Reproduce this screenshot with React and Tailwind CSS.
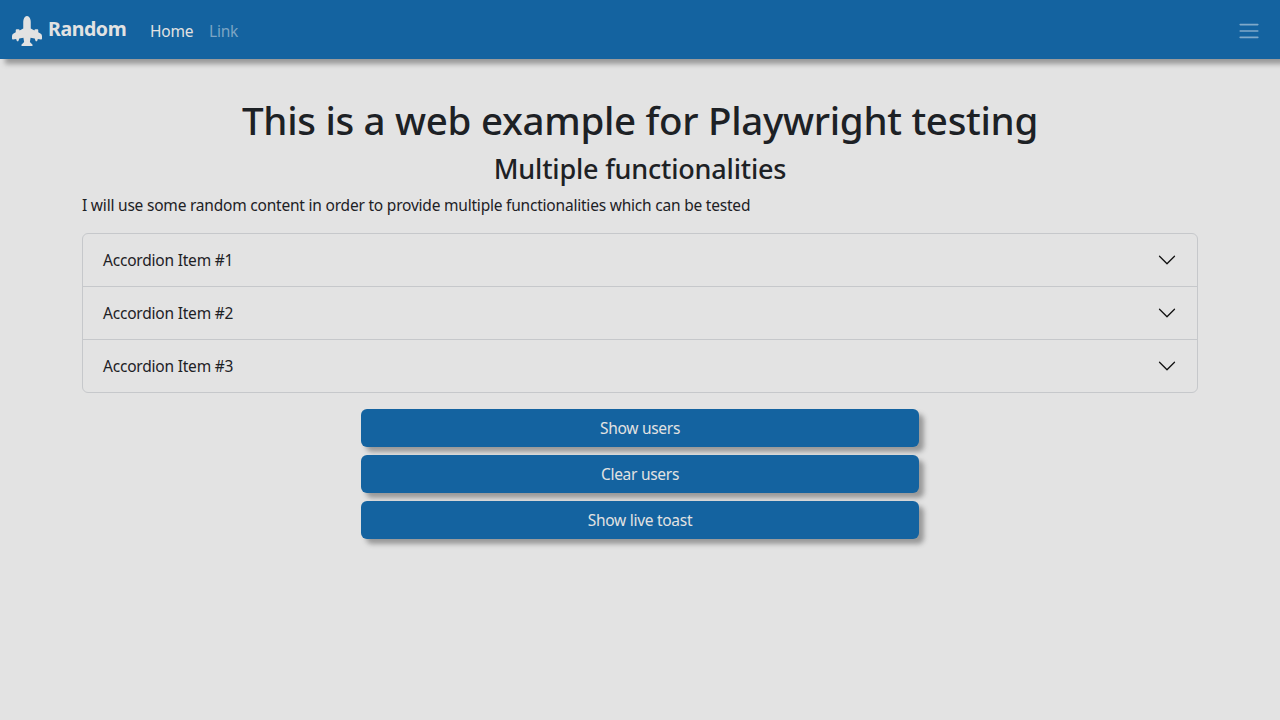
const items = ["Accordion Item #1", "Accordion Item #2", "Accordion Item #3"];
const buttons = ["Show users", "Clear users", "Show live toast"];

function Plane() {
  return (
    <svg width="30" height="30" viewBox="0 0 16 16" fill="currentColor" className="shrink-0">
      <path d="M8 0c-.787 0-1.292.592-1.572 1.151A4.347 4.347 0 0 0 6 3v3.691l-2 1V7.5a.5.5 0 0 0-.5-.5h-1a.5.5 0 0 0-.5.5v1.191l-1.17.585A1.5 1.5 0 0 0 0 10.618V12a.5.5 0 0 0 .582.493l1.631-.272.313.937a.5.5 0 0 0 .948 0l.405-1.214 2.21-.369.375 2.253-1.318 1.318A.5.5 0 0 0 5.5 16h5a.5.5 0 0 0 .354-.854l-1.318-1.318.375-2.253 2.21.369.405 1.214a.5.5 0 0 0 .948 0l.313-.937 1.63.272A.5.5 0 0 0 16 12v-1.382a1.5 1.5 0 0 0-.83-1.342L14 8.691V7.5a.5.5 0 0 0-.5-.5h-1a.5.5 0 0 0-.5.5v.191l-2-1V3c0-.568-.14-1.271-.428-1.849C9.292.591 8.787 0 8 0Z" />
    </svg>
  );
}

function Chevron() {
  return (
    <svg width="20" height="20" viewBox="0 0 16 16" fill="#111111">
      <path fillRule="evenodd" d="M1.646 4.646a.5.5 0 0 1 .708 0L8 10.293l5.646-5.647a.5.5 0 0 1 .708.708l-6 6a.5.5 0 0 1-.708 0l-6-6a.5.5 0 0 1 0-.708z" />
    </svg>
  );
}

function MenuIcon() {
  return (
    <svg width="24" height="24" viewBox="0 0 30 30" fill="none" className="text-[#7fa9c9]">
      <path stroke="currentColor" strokeLinecap="round" strokeMiterlimit="10" strokeWidth="2" d="M4 7h22M4 15h22M4 23h22" />
    </svg>
  );
}

export default function App() {
  return (
    <div className="h-[720px] overflow-hidden bg-[#e3e3e3] font-['Noto_Sans','Open_Sans',sans-serif] text-[15.5px] leading-6 tracking-[-0.21px] text-[#1d2125]">
      <nav className="flex h-[59px] items-center bg-[#1463a0] px-3 text-[#e2e2e2] shadow-[5px_5px_5px_#999999]">
        <a className="mt-[2px] flex items-center gap-[6px]">
          <Plane />
          <span className="-mt-1 w-[78px] whitespace-nowrap text-[19.5px] font-bold tracking-[-0.4px]">Random</span>
        </a>
        <a className="ml-6 mt-[3px] w-[43px] whitespace-nowrap">Home</a>
        <a className="ml-4 mt-[3px] whitespace-nowrap text-[#7ca5c4]">Link</a>
        <button className="ml-auto mr-[7px] mt-[3px]">
          <MenuIcon />
        </button>
      </nav>
      <main className="mx-auto flex w-[1116px] flex-col pt-[37px]">
        <h1 className="mb-2 whitespace-nowrap text-center text-[38.5px] font-medium leading-[48px] tracking-[-0.3px]">This is a web example for Playwright testing</h1>
        <h2 className="mb-2 whitespace-nowrap text-center text-[27px] font-medium leading-[33px] tracking-[-0.2px]">Multiple functionalities</h2>
        <p className="mb-4 whitespace-nowrap">I will use some random content in order to provide multiple functionalities which can be tested</p>
        <div className="divide-y divide-[#c6c8cb] rounded-md border border-[#c6c8cb]">
          {items.map((label) => (
            <button key={label} className="flex h-[53px] w-full items-center justify-between px-5 last:h-[52px]">
              <span>{label}</span>
              <Chevron />
            </button>
          ))}
        </div>
        <div className="mx-auto mt-4 flex w-[558px] flex-col gap-2">
          {buttons.map((label) => (
            <button key={label} className="h-[38px] rounded-md bg-[#1463a0] tracking-[-0.28px] text-[#e2e2e2] shadow-[5px_5px_5px_#999999]">
              {label}
            </button>
          ))}
        </div>
      </main>
    </div>
  );
}
